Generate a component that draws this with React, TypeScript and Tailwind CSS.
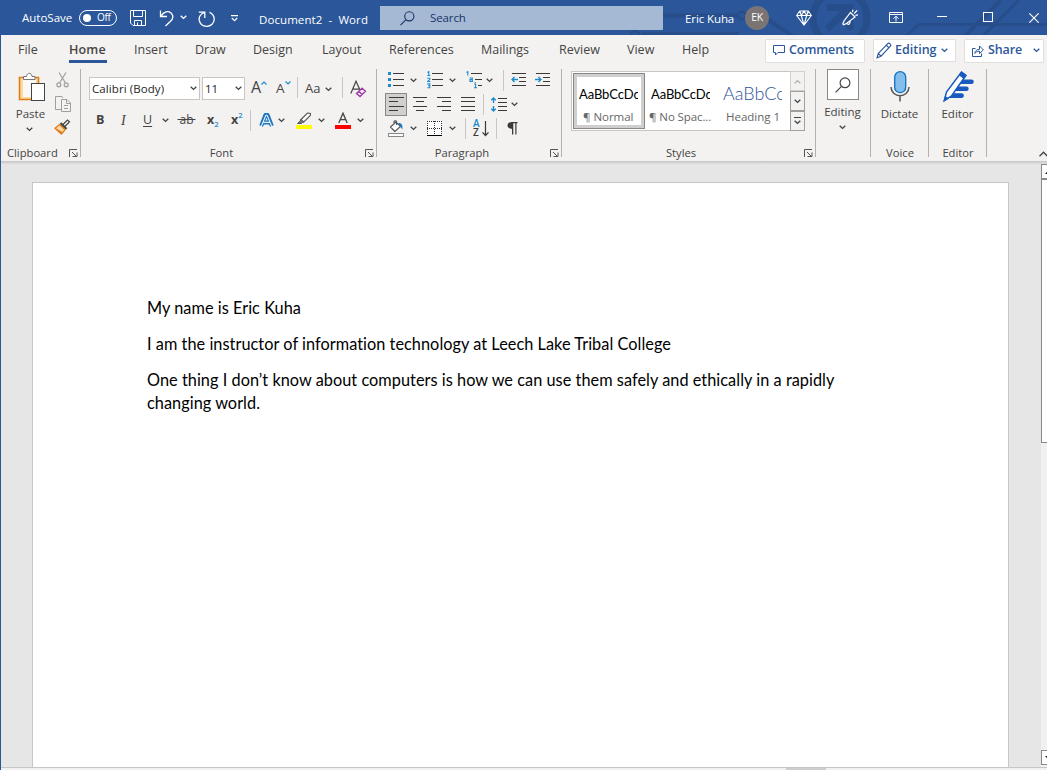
import type { ReactNode } from "react";

type SlotProps = { className: string; children?: ReactNode };

/** A fixed-width cell in a toolbar row; its width reaches to the next cell. */
function Slot({ className, children }: SlotProps) {
  return <div className={`flex shrink-0 items-center whitespace-nowrap ${className}`}>{children}</div>;
}

function Chevron({ className = "text-[#444444]" }: { className?: string }) {
  return (
    <svg width="7" height="5" viewBox="0 0 7 5" className={`shrink-0 ${className}`}>
      <path d="M0.7 0.8 L3.5 3.4 L6.3 0.8" fill="none" stroke="currentColor" strokeWidth="1.4" />
    </svg>
  );
}

function Divider({ className = "" }: { className?: string }) {
  return <div className={`h-[21px] w-px shrink-0 bg-[#c8c6c4] ${className}`} />;
}

function Launcher() {
  return (
    <svg width="9" height="9" viewBox="0 0 9 9" className="shrink-0">
      <path d="M0.5 8 V0.5 H8 M3 3 L7 7 M8 3.5 V7.5 H3.5" fill="none" stroke="#555" />
    </svg>
  );
}

function Circuit() {
  return (
    <svg width="420" height="35" viewBox="0 0 420 35" className="absolute top-0 right-0" fill="none" stroke="#274e8a">
      <g strokeWidth="4">
        <path d="M36 15.5 H110" />
        <circle cx="115" cy="15.5" r="4" strokeWidth="2.5" />
        <path d="M119 17 H137 L167 37" />
        <path d="M15 33.5 H112" strokeWidth="3" />
        <circle cx="8" cy="35" r="4" strokeWidth="3" />
        <circle cx="213" cy="18" r="27" strokeWidth="7" />
        <path d="M200 7.5 H223 V30 M221 9 L200 29" strokeWidth="7" />
        <path d="M279 36 L292 24.5 H420" strokeWidth="3" />
        <path d="M338 36 L374 0" />
        <path d="M356 36 L392 0" strokeWidth="3" />
      </g>
    </svg>
  );
}

function TitleBar() {
  return (
    <header className="relative flex h-[35px] shrink-0 bg-[#2b579a] text-[11.5px] text-white">
      <Circuit />
      <div className="relative flex h-[35px] w-full">
        <Slot className="w-[79px] pl-[22px]">AutoSave</Slot>
        <Slot className="w-[51px]">
          <div className="flex h-4 w-[38px] items-center gap-[6px] rounded-full border border-white pl-[3px] text-[10px] tracking-[-0.3px]">
            <span className="size-2 rounded-full bg-white" />
            Off
          </div>
        </Slot>
        <Slot className="w-[29px] pt-[2px]">
          <svg width="17" height="17" viewBox="0 0 17 17" fill="none" stroke="white">
            <path d="M0.5 0.5 H15.5 V15.5 H3 L0.5 13 Z M3.5 0.5 V6.5 H12.5 V0.5 M4.5 15 V10.5 H11.5 V15 M7.5 12.5 V15" />
          </svg>
        </Slot>
        <Slot className="w-[21px] pt-[1px]">
          <svg width="16" height="18" viewBox="0 0 16 18" fill="none" stroke="white" strokeWidth="1.3">
            <path d="M1.5 1.5 V7.5 H8 M1.8 7.3 C5 2.5 9 1.5 12 4 C15 6.8 14 10 11.5 12.2 L6.5 17" />
          </svg>
        </Slot>
        <Slot className="w-[18px]"><Chevron className="text-white" /></Slot>
        <Slot className="w-[33px] pt-[2px]">
          <svg width="18" height="18" viewBox="0 0 18 18" fill="none" stroke="white" strokeWidth="1.3">
            <path d="M0.8 2.2 H6.8 V8 M6.5 2.5 C2.5 4 0.8 7 1.2 10.2 C2 14.5 5.4 16.5 9 16.4 C13 16.2 16 13.3 16.2 9.5 C16.3 6 14.3 3.5 11.5 2.3" />
          </svg>
        </Slot>
        <Slot className="w-[28px] pt-[1px]">
          <svg width="7" height="7" viewBox="0 0 7 7" fill="none" stroke="white" strokeWidth="1.2">
            <path d="M0 0.6 H7 M0.8 3 L3.5 5.6 L6.2 3" />
          </svg>
        </Slot>
        <Slot className="w-[121px] pt-[4px] tracking-[0.08px]"><span className="whitespace-pre">Document2  -  Word</span></Slot>
        <div className="mt-[6px] flex h-6 w-[283px] shrink-0 items-center bg-[#a6b9d4] pl-5 text-[#133567]">
          <svg width="15" height="15" viewBox="0 0 15 15" fill="none" stroke="currentColor" strokeWidth="1.1">
            <circle cx="9.3" cy="5.3" r="4.6" />
            <path d="M6 8.6 L0.5 14.2" />
          </svg>
          <span className="ml-[15px] tracking-[-0.1px]">Search</span>
        </div>
        <Slot className="w-[82px] pt-[3px] pl-[22px] tracking-[-0.1px]">Eric Kuha</Slot>
        <Slot className="w-[51px] pt-px">
          <span className="flex size-6 items-center justify-center rounded-full bg-[#7a7574] text-[10.5px] tracking-[-0.3px]">EK</span>
        </Slot>
        <Slot className="w-[46px]">
          <svg width="16" height="16" viewBox="0 0 16 16" fill="none" stroke="white" strokeWidth="1.1">
            <path d="M3.8 1 H12.2 L15.4 5.5 L8 15 L0.6 5.5 Z M0.6 5.5 H15.4 M3.8 1 L5.3 5.5 L8 15 L10.7 5.5 L12.2 1 M5.3 5.5 L8 1 L10.7 5.5" />
          </svg>
        </Slot>
        <Slot className="w-[47px]">
          <svg width="17" height="17" viewBox="0 0 17 17" fill="none" stroke="white" strokeWidth="1.2">
            <path d="M8.5 3.5 L13 8 L4.5 14.5 L1.5 15.8 L0.8 15 L2 12 Z M4.8 14.2 C6 16.5 8.5 15 8 12.3 M10.5 3.2 L11 0.6 M12.2 4.5 L15.2 1.4 M13.4 6.4 L16 5.8" />
          </svg>
        </Slot>
        <Slot className="w-[48px]">
          <svg width="14" height="11" viewBox="0 0 14 11" fill="none" stroke="white">
            <path d="M0.5 0.5 H13.5 V10.5 H0.5 Z M0.5 2.5 H13.5 M7 9.5 V4.5 M4.5 6.7 L7 4.2 L9.5 6.7" />
          </svg>
        </Slot>
        <Slot className="w-[46px]"><div className="mb-[2px] h-px w-[10px] bg-white" /></Slot>
        <Slot className="w-[46px]"><div className="mb-px size-[10px] border border-white" /></Slot>
        <Slot className="w-[18px]">
          <svg width="10" height="10" viewBox="0 0 10 10"><path d="M0.3 0.3 L9.7 9.7 M9.7 0.3 L0.3 9.7" stroke="white" strokeWidth="1.1" /></svg>
        </Slot>
      </div>
    </header>
  );
}

function TabBar() {
  return (
    <nav className="flex h-[31px] shrink-0 text-[12.5px] text-[#444444]">
      <Slot className="w-[68px] pl-[17px]">File</Slot>
      <Slot className="relative w-[65px] font-semibold tracking-[0.15px]">
        Home
        <span className="absolute bottom-[3px] left-0 h-[3px] w-[38px] bg-[#2b579a]" />
      </Slot>
      <Slot className="w-[61px]">Insert</Slot>
      <Slot className="w-[58px]">Draw</Slot>
      <Slot className="w-[69px]">Design</Slot>
      <Slot className="w-[67px]">Layout</Slot>
      <Slot className="w-[92px]">References</Slot>
      <Slot className="w-[78px]">Mailings</Slot>
      <Slot className="w-[68px]">Review</Slot>
      <Slot className="w-[55px]">View</Slot>
      <Slot className="w-[83px]">Help</Slot>
      <div className="flex items-center font-semibold text-[#2b579a]">
        <Slot className="mr-2 h-6 w-[100px] rounded-[2px] border border-[#e1dfdd] bg-white pl-[7px]">
          <svg width="12" height="11" viewBox="0 0 12 11" className="mr-[4px]" fill="none" stroke="currentColor">
            <path d="M0.5 0.5 H11.5 V7.5 H5 L2.5 10 V7.5 H0.5 Z" />
          </svg>
          <span className="tracking-[-0.08px]">Comments</span>
        </Slot>
        <Slot className="mr-2 h-[23px] w-[83px] border border-[#e1dfdd] bg-white pl-[2px]">
          <svg width="16" height="17" viewBox="0 0 16 17" className="mr-[3px]" fill="none" stroke="currentColor" strokeWidth="1.1">
            <path d="M1 15.8 L2.2 11.5 L12 1.3 C13 0.5 15.5 2.5 14.6 4 L5 14.2 Z M10.2 3 L13 5.9 M2.2 11.5 L5 14.2" />
          </svg>
          Editing
          <Chevron className="ml-[4px]" />
        </Slot>
        <Slot className="h-6 w-[80px] rounded-[2px] border border-[#e1dfdd] bg-white pl-[7px]">
          <svg width="12" height="12" viewBox="0 0 12 12" className="mr-[4px]" fill="none" stroke="currentColor">
            <path d="M3.5 3.5 H0.5 V11.5 H9.5 V8.5 M2.8 8.5 C3 5.5 5 4.3 7.5 4.3 V1 L11.4 4.9 L7.5 8.6 V6.2 C5.5 6 4 6.8 2.8 8.5 Z" />
          </svg>
          <span className="tracking-[-0.1px]">Share</span>
          <Chevron className="ml-[11px]" />
        </Slot>
      </div>
    </nav>
  );
}

type GroupProps = { width: string; label?: string; launcher?: boolean; labelClass?: string; children: ReactNode };

function Group({ width, label, launcher, labelClass = "justify-center", children }: GroupProps) {
  return (
    <section className={`flex h-[95px] shrink-0 ${width}`}>
      <div className="flex min-w-0 grow flex-col">
        <div className="h-[80px]">{children}</div>
        <div className="flex h-[15px] items-center pr-[2px]">
          <span className={`flex grow text-[11.2px] ${labelClass}`}>{label}</span>
          {launcher && <Launcher />}
        </div>
      </div>
      <div className="mt-[3px] h-[88px] w-px bg-[#b3b0ad]" />
    </section>
  );
}

function Clipboard() {
  return (
    <Group width="w-[80px]" label="Clipboard" launcher labelClass="pl-[6px]">
      <div className="flex">
        <div className="flex w-[52px] flex-col items-center pl-[5px]">
          <svg width="28" height="32" viewBox="0 0 28 32" className="mt-[6px] ml-[5px]">
            <path d="M1.5 5.5 H20.5 V27.5 H1.5 Z" fill="#f9dc9c" stroke="#e07b1a" strokeWidth="1.6" />
            <rect x="5" y="8" width="13" height="17" fill="#faf9f8" />
            <path d="M5.5 7.5 V4.5 H8.5 C9 0.3 13.5 0.3 14 4.5 H17 V7.5 Z" fill="#fff" stroke="#777" />
            <rect x="13.5" y="11.5" width="13" height="17" fill="#fff" stroke="#444" />
          </svg>
          <span className="mt-[2px] ml-[2px] text-[11.5px] leading-[16px]">Paste</span>
          <Chevron className="mt-[5px]" />
        </div>
        <div className="flex flex-col">
          <svg width="14" height="16" viewBox="0 0 14 16" className="mt-[6px] ml-[3px]" fill="none" stroke="#a19f9d" strokeWidth="1.2">
            <path d="M3 0.5 L9.5 11 M10 0.5 L3.5 11" />
            <circle cx="2.8" cy="12.8" r="2" />
            <circle cx="10.2" cy="12.8" r="2" />
          </svg>
          <svg width="17" height="17" viewBox="0 0 17 17" className="mt-[8px] ml-[2px]" fill="none" stroke="#a19f9d">
            <path d="M6 13.5 H0.5 V0.5 H7 L8 2 M6.5 3.5 H12 L15.5 7 V15.5 H6.5 Z M11.5 4 V7.5 H15 M9 9.5 H13 M9 12.5 H13" />
          </svg>
          <svg width="17" height="16" viewBox="0 0 17 16" className="mt-[6px] ml-px">
            <path d="M8.5 6 L11 3.5 L13.5 1 L15.5 2.8 L12.5 5.7 L10.7 7.5" fill="white" stroke="#444" strokeWidth="1.2" />
            <path d="M6.5 4 L12.5 10" stroke="#444" strokeWidth="2.3" />
            <path d="M5.5 5.5 L11 10.8 L7.5 15 L1 9.2 Z" fill="#fbd9a3" stroke="#e07b1a" strokeWidth="1.3" />
            <path d="M2 9.5 L8 12.8 L7.5 15 L5 13.5 Z" fill="#e07b1a" />
          </svg>
        </div>
      </div>
    </Group>
  );
}

function FontGroup() {
  return (
    <Group width="w-[296px]" label="Font" launcher labelClass="justify-center pr-[3px]">
      <div className="mt-[11px] flex h-[24px] pl-2 text-[#444]">
        <div className="mr-[2px] flex h-[23px] w-[111px] shrink-0 items-center justify-between border border-[#c8c6c4] bg-white pr-[2px] pl-[2px] text-[11.5px] text-[#262626]">
          <span className="tracking-[0.08px]">Calibri (Body)</span><Chevron />
        </div>
        <div className="mr-[6px] flex h-[23px] w-[43px] shrink-0 items-center justify-between border border-[#c8c6c4] bg-white pr-[2px] pl-[2px] text-[11.5px] text-[#262626]">
          11<Chevron />
        </div>
        <Slot className="w-[26px] items-start text-[16px] leading-[20px]">A
          <svg width="6" height="4" viewBox="0 0 6 4" className="mt-[4px]"><path d="M0.5 3.5 L3 1 L5.5 3.5" fill="none" stroke="#1e8bcd" strokeWidth="1.2" /></svg>
        </Slot>
        <Slot className="w-[20px] items-start pt-px text-[13.5px] leading-[20px]">
          <span className="-ml-px">A</span>
          <svg width="6" height="4" viewBox="0 0 6 4" className="mt-[3px]"><path d="M0.5 0.5 L3 3 L5.5 0.5" fill="none" stroke="#1e8bcd" strokeWidth="1.2" /></svg>
        </Slot>
        <Divider className="mr-[7px]" />
        <Slot className="w-[20px] text-[13px]">Aa</Slot>
        <Slot className="w-[17px]"><Chevron /></Slot>
        <Divider className="mr-[7px]" />
        <Slot className="w-[20px]">
          <svg width="17" height="18" viewBox="0 0 17 18" fill="none">
            <path d="M0.8 13.5 L6 1.2 L10.5 11 M2.7 9.2 H9" stroke="#444" strokeWidth="1.2" />
            <path d="M6.5 13.5 L12 8.2 L15.5 11.3 L10 16.5 Z M8.7 11.3 L12.3 14.5" stroke="#9b3fa5" strokeWidth="1.4" fill="#f7e9f8" />
          </svg>
        </Slot>
      </div>
      <div className="mt-[8px] flex h-[22px] items-center pl-[15px] text-[12.5px] text-[#444]">
        <Slot className="w-[24px] font-bold">B</Slot>
        <Slot className="w-[23px] pl-px font-['Liberation_Serif'] text-[14px] italic">I</Slot>
        <Slot className="w-[19px] underline underline-offset-2">U</Slot>
        <Slot className="w-[17px]"><Chevron /></Slot>
        <Slot className="w-[28px] text-[12px]">
          <span className="flex w-[15px] justify-center line-through">{"\u2009ab\u2009"}</span>
        </Slot>
        <Slot className="w-[24px] text-[12.5px] font-bold">x<span className="mt-[10px] text-[7.5px] font-semibold text-[#1e8bcd]">2</span></Slot>
        <Slot className="w-[19px] text-[12.5px] font-bold">x<span className="mb-[9px] text-[7.5px] font-semibold text-[#1e8bcd]">2</span></Slot>
        <Divider className="mr-[8px]" />
        <Slot className="w-[19px]">
          <svg width="15" height="15" viewBox="0 0 15 15" fill="none" strokeLinejoin="round">
            <path d="M2.2 13 L6.4 2 H8.6 L12.8 13 M4 9.5 H11" stroke="#1a73bf" strokeWidth="4" />
            <path d="M2.2 13.5 L6.9 2.3 H8.1 L12.8 13.5 M4 9.4 H11" stroke="#e3f0fa" strokeWidth="1.1" />
          </svg>
        </Slot>
        <Slot className="w-[18px]"><Chevron /></Slot>
        <Slot className="w-[22px]">
          <svg width="16" height="17" viewBox="0 0 16 17">
            <path d="M5 7.5 L11.5 1 L14.5 1.5 L14.3 3.5 L7.8 10 Z" fill="#fff" stroke="#555" strokeWidth="1.1" />
            <path d="M5 7 L4.2 9 L1.5 11.5 H5.5 L6.3 10.7 L8 10" fill="#777" stroke="#555" />
            <rect y="13" width="16" height="4" fill="#ffff00" />
          </svg>
        </Slot>
        <Slot className="w-[17px]"><Chevron /></Slot>
        <Slot className="w-[22px]">
          <svg width="16" height="17" viewBox="0 0 16 17">
            <path d="M3.8 11 L8 1.2 L12.2 11 M5.4 7.6 H10.6" fill="none" stroke="#444" strokeWidth="1.3" />
            <rect y="13" width="16" height="4" fill="#ff0000" />
          </svg>
        </Slot>
        <Slot className="w-[7px]"><Chevron /></Slot>
      </div>
    </Group>
  );
}

function Lines({ d }: { d: string }) {
  return <svg width="15" height="14" viewBox="0 0 15 14"><path d={d} stroke="#3b3a39" /></svg>;
}

function Paragraph() {
  return (
    <Group width="w-[185px]" label="Paragraph" launcher labelClass="justify-center pr-[3px]">
      <div className="mt-[2px] flex h-[24px] items-center pl-[11px]">
        <Slot className="w-[22px]">
          <svg width="16" height="16" viewBox="0 0 16 16">
            <path d="M0 0 H3 V3 H0 Z M0 6 H3 V9 H0 Z M0 12 H3 V15 H0 Z" fill="#1e8bcd" />
            <path d="M5 1.5 H16 M5 7.5 H16 M5 13.5 H16" stroke="#3b3a39" />
          </svg>
        </Slot>
        <Slot className="w-[17px]"><Chevron /></Slot>
        <Slot className="w-[22px]">
          <svg width="16" height="18" viewBox="0 0 16 18" fill="none">
            <path d="M0.5 1.5 L1.8 0.6 V4.5 M0.3 4.5 H3.3 M0.3 7.2 H2.8 V8.6 L0.6 10.5 H3.3 M0.3 12.9 H2.8 V16.7 H0.3 M1 14.8 H2.8" stroke="#1e8bcd" strokeWidth="1.1" />
            <path d="M5 2.5 H16 M5 8.5 H16 M5 14.5 H16" stroke="#3b3a39" />
          </svg>
        </Slot>
        <Slot className="w-[17px]"><Chevron /></Slot>
        <Slot className="w-[20px]">
          <svg width="16" height="18" viewBox="0 0 16 18" fill="none">
            <path d="M0.5 1.5 L1.8 0.6 V4.5 M3.5 7 H6.3 V10.6 M6.3 8.6 H4 V10.5 H7 M8 13 H9.6 V16.8 M8 16.8 H11 M9.2 11 V12" stroke="#1e8bcd" strokeWidth="1.1" />
            <path d="M5 2.5 H16 M9 8.5 H16 M12 14.5 H16" stroke="#3b3a39" />
          </svg>
        </Slot>
        <Slot className="w-[17px]"><Chevron /></Slot>
        <Divider className="mr-[7px]" />
        <Slot className="w-[24px]">
          <svg width="15" height="14" viewBox="0 0 15 14">
            <path d="M1 0.5 H15 M8 4.5 H15 M8 8.5 H15 M1 12.5 H15" stroke="#3b3a39" />
            <path d="M7 6.5 H1 M3.5 4 L1 6.5 L3.5 9" fill="none" stroke="#1e8bcd" strokeWidth="1.4" />
          </svg>
        </Slot>
        <Slot className="w-[16px]">
          <svg width="15" height="14" viewBox="0 0 15 14">
            <path d="M1 0.5 H15 M8 4.5 H15 M8 8.5 H15 M1 12.5 H15" stroke="#3b3a39" />
            <path d="M0 6.5 H6 M3.5 4 L6 6.5 L3.5 9" fill="none" stroke="#1e8bcd" strokeWidth="1.4" />
          </svg>
        </Slot>
      </div>
      <div className="flex h-[24px] items-center pl-[8px]">
        <div className="mr-[6px] flex h-[23px] w-[22px] items-center justify-center border border-[#8a8886] bg-[#d2d0ce]">
          <Lines d="M0 0.5 H15 M0 4.5 H9 M0 9.5 H15 M0 13.5 H9" />
        </div>
        <Slot className="w-[24px]"><Lines d="M0 0.5 H14 M3 4.5 H11 M0 9.5 H14 M3 13.5 H11" /></Slot>
        <Slot className="w-[24px]"><Lines d="M0 0.5 H14 M5 4.5 H14 M0 9.5 H14 M5 13.5 H14" /></Slot>
        <Slot className="w-[22px]"><Lines d="M0 0.5 H14 M0 4.5 H14 M0 9.5 H14 M0 13.5 H14" /></Slot>
        <Divider className="mr-[7px]" />
        <Slot className="w-[20px]">
          <svg width="17" height="15" viewBox="0 0 17 15">
            <path d="M7 1.5 H16 M7 5.5 H16 M7 9.5 H16 M7 13.5 H16" stroke="#3b3a39" />
            <path d="M2.5 1 V6 M2.5 9 V14 M0.3 3.3 L2.5 1 L4.7 3.3 M0.3 11.7 L2.5 14 L4.7 11.7" fill="none" stroke="#1e8bcd" strokeWidth="1.4" />
          </svg>
        </Slot>
        <Chevron />
      </div>
      <div className="flex h-[24px] items-center pl-[11px]">
        <Slot className="w-[22px]">
          <svg width="16" height="17" viewBox="0 0 16 17">
            <path d="M2.5 7 L8 2 L12.5 6.5 L6.8 11.5 Z M6 4 V1.5 C6 0.5 8.5 0.5 8.5 1.5 V5" fill="#fff" stroke="#555" strokeWidth="1.1" />
            <path d="M10 3 C13.5 2.5 15 5 14.3 9.5 L12 6 Z" fill="#1979ca" />
            <rect x="0.5" y="13.5" width="15" height="3" fill="white" stroke="#888" />
          </svg>
        </Slot>
        <Slot className="w-[17px]"><Chevron /></Slot>
        <Slot className="w-[22px]">
          <svg width="15" height="15" viewBox="0 0 15 15">
            <rect width="15" height="14" fill="white" />
            <path d="M0 0.5 H15 M0 7.5 H15 M0.5 0 V13 M7.5 0 V13 M14.5 0 V13" stroke="#333" strokeDasharray="1 1" />
            <path d="M0 14.5 H15" stroke="#000" />
          </svg>
        </Slot>
        <Slot className="w-[16px]"><Chevron /></Slot>
        <Divider className="mr-[7px]" />
        <Slot className="w-[23px]">
          <div className="flex w-[9px] flex-col text-[10px] leading-[9px] font-semibold text-[#3b3a39]">
            <span className="text-[#1e8bcd]">A</span>
            <span>Z</span>
          </div>
          <svg width="8" height="17" viewBox="0 0 8 17">
            <path d="M3.5 1 V15.5 M0.5 12.3 L3.5 15.5 L6.5 12.3" fill="none" stroke="#3b3a39" strokeWidth="1.2" />
          </svg>
        </Slot>
        <Divider className="mr-[10px]" />
        <svg width="11" height="13" viewBox="0 0 11 13">
          <path d="M5 0 H10.5 V1.2 H9.5 V12.5 H8.3 V1.2 H6.3 V12.5 H5 V6.8 C-1 6.8 -1 0 5 0 Z" fill="#3b3a39" />
        </svg>
      </div>
    </Group>
  );
}

function Styles() {
  return (
    <Group width="w-[254px]" label="Styles" launcher labelClass="justify-center pr-[4px]">
      <div className="mt-[5px] ml-[9px] flex h-[60px] w-[234px] border border-[#c8c6c4] bg-white p-px text-[11.5px] text-[#666]">
        <div className="flex h-[56px] w-[72px] flex-col border border-[#8a8886] bg-[#d0cfce] p-[3px]">
          <div className="flex h-full flex-col bg-white">
            <span className="mt-[9px] h-[16px] w-[61px] overflow-hidden pl-[2px] font-[Lato] text-[13px] leading-[16px] tracking-[-0.1px] whitespace-nowrap text-black">AaBbCcDc</span>
            <span className="mt-[7px] pl-[6px] leading-[16px] tracking-[-0.05px] whitespace-nowrap">¶ Normal</span>
          </div>
        </div>
        <div className="flex w-[73px] flex-col pt-[4px] pl-[4px]">
          <span className="mt-[9px] h-[16px] w-[61px] overflow-hidden pl-[2px] font-[Lato] text-[13px] leading-[16px] tracking-[-0.1px] whitespace-nowrap text-black">AaBbCcDc</span>
          <span className="mt-[7px] leading-[16px] tracking-[-0.1px] whitespace-nowrap">¶ No Spac...</span>
        </div>
        <div className="flex w-[72px] flex-col pt-[4px] pl-[5px]">
          <span className="mt-[5px] h-[22px] w-[59px] overflow-hidden font-[Lato] text-[18px] leading-[22px] font-light whitespace-nowrap text-[#2f5496]">AaBbCc</span>
          <span className="mt-[5px] pl-[3px] leading-[16px] whitespace-nowrap">Heading 1</span>
        </div>
        <div className="-my-[2px] -mr-[2px] flex w-[15px] grow flex-col bg-[#f3f2f1]">
          <div className="flex h-[20px] items-center justify-center border border-[#d2d0ce]"><Chevron className="rotate-180 text-[#b3b0ad]" /></div>
          <div className="flex h-[20px] items-center justify-center border border-[#a19f9d]"><Chevron /></div>
          <div className="flex h-[20px] flex-col items-center justify-center gap-[2px] border border-[#a19f9d]">
            <span className="h-px w-[7px] bg-[#444]" /><Chevron />
          </div>
        </div>
      </div>
    </Group>
  );
}

function Ribbon() {
  return (
    <div className="relative flex h-[95px] shrink-0 text-[11.5px] text-[#444444]">
      <Clipboard />
      <FontGroup />
      <Paragraph />
      <Styles />
      <Group width="w-[55px]">
        <div className="flex flex-col items-center pt-[3px] pr-px">
          <div className="flex h-[31px] w-[32px] items-center justify-center border border-[#8a8886] bg-white">
            <svg width="16" height="16" viewBox="0 0 16 16" fill="none" stroke="#444" strokeWidth="1.2"><circle cx="10" cy="5.8" r="4.9" /><path d="M6.5 9.4 L0.6 15.3" /></svg>
          </div>
          <span className="mt-[4px] leading-[16px]">Editing</span>
          <Chevron className="mt-[5px]" />
        </div>
      </Group>
      <Group width="w-[58px]" label="Voice" labelClass="justify-center pl-[3px]">
        <div className="flex flex-col items-center pt-[5px]">
          <svg width="20" height="31" viewBox="0 0 20 31">
            <rect x="4.7" y="0.7" width="11" height="21" rx="5.5" fill="#83beec" stroke="#1171c0" strokeWidth="1.3" />
            <path d="M1 16 C1.5 27.5 18.5 27.5 19 16 M10 25 V30.5" fill="none" stroke="#555" strokeWidth="1.5" />
          </svg>
          <span className="mt-[4px] leading-[16px] tracking-[-0.05px]">Dictate</span>
        </div>
      </Group>
      <Group width="w-[58px]" label="Editor" labelClass="justify-center pl-[3px]">
        <div className="flex flex-col items-center pt-[5px]">
          <svg width="32" height="31" viewBox="0 0 32 31" className="ml-[2px]">
            <path d="M18 8.5 H28.5 a2.3 2.3 0 0 1 0 4.6 H14 Z M13 15.5 H23.5 a2.2 2.2 0 0 1 0 4.4 H9 Z M9 22.3 H18.5 a2.4 2.4 0 0 1 0 4.8 H5 Z" fill="#185abd" />
            <path d="M1.2 29.8 L3.5 21 L18.5 1 L23 4.3 L8.5 25 Z" fill="white" stroke="#185abd" strokeWidth="1.5" />
            <path d="M16.2 4 L18.5 1 L23 4.3 L20.8 7.4 Z M1.2 29.8 L2.3 25.5 L5 27.3 Z" fill="#185abd" stroke="#185abd" />
          </svg>
          <span className="mt-[4px] leading-[16px]">Editor</span>
        </div>
      </Group>
      <div className="-mr-px flex grow items-end justify-end pb-[4px]">
        <svg width="9" height="6" viewBox="0 0 9 6"><path d="M0.5 5.3 L4.5 1.2 L8.5 5.3" fill="none" stroke="#444" strokeWidth="1.3" /></svg>
      </div>
    </div>
  );
}

function Document() {
  return (
    <main className="flex min-h-0 grow bg-[#e6e6e6]">
      <article className="mt-[18px] ml-[31px] w-[977px] shrink-0 border border-b-0 border-[#c6c6c6] bg-white pt-[113px] pl-[114px] font-[Lato] text-[16.3px] leading-[23px] tracking-[0.04px] text-black [font-variant-ligatures:none]">
        <p className="mb-[13px] whitespace-nowrap">My name is Eric Kuha</p>
        <p className="mb-[13px] whitespace-nowrap">I am the instructor of information technology at Leech Lake Tribal College</p>
        <p className="whitespace-nowrap">
          One thing I don’t know about computers is how we can use them safely and ethically in a rapidly
          <br />
          changing world.
        </p>
      </article>
      <div className="ml-auto flex w-[6px] flex-col overflow-hidden bg-[#f1f1f1]">
        <div className="flex h-[15px] w-[15px] shrink-0 items-center justify-start border border-[#8a8886] bg-white pl-[3px]">
          <svg width="7" height="4" viewBox="0 0 7 4"><path d="M0 4 L3.5 0 L7 4 Z" fill="#222" /></svg>
        </div>
        <div className="h-[264px] w-[15px] shrink-0 border border-[#8a8886] bg-white" />
        <div className="mt-auto mb-[2px] flex h-[15px] w-[15px] shrink-0 items-center border border-[#8a8886] bg-white pl-[3px]">
          <svg width="7" height="4" viewBox="0 0 7 4"><path d="M0 0 L3.5 4 L7 0 Z" fill="#222" /></svg>
        </div>
      </div>
    </main>
  );
}

export default function App() {
  return (
    <div className="flex h-[770px] w-[1047px] flex-col overflow-hidden bg-[#f3f2f1] font-['Open_Sans',sans-serif]">
      <TitleBar />
      <div className="flex min-h-0 grow flex-col border-l border-[#2b579a]">
        <TabBar />
        <Ribbon />
        <div className="h-[3px] shrink-0 bg-linear-to-b from-[#c8c6c4] to-[#e0e0e0]" />
        <Document />
        <div className="h-[3px] shrink-0 border-t border-[#c6c6c6] bg-[#f1f1f1]">
          <div className="ml-[785px] h-[2px] w-[40px] bg-[#cdcdcd]" />
        </div>
      </div>
    </div>
  );
}
